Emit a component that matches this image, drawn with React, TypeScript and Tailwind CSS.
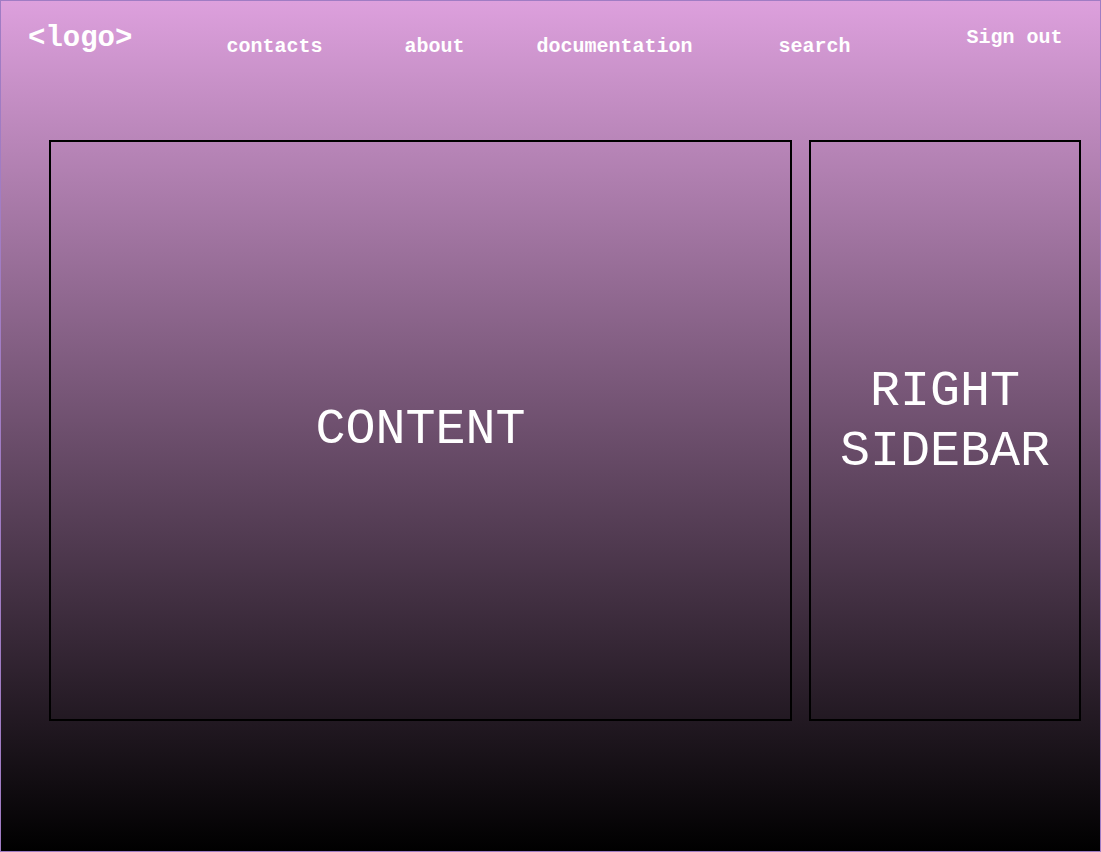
export default function App() {
  const mono = { fontFamily: '"Liberation Mono", "DejaVu Sans Mono", monospace' };
  return (
    <div
      className="w-[1101px] h-[852px] border border-[#a07cc4] bg-[linear-gradient(to_bottom,#dda0dd,#000000)] text-white flex flex-col"
      style={mono}
    >
      <header className="h-[139px] flex items-start pl-[27px] shrink-0">
        <div className="mt-[24px] text-[29px] leading-[28px] font-bold">&lt;logo&gt;</div>
        <a className="ml-[94px] mt-[36px] text-[20px] leading-[20px] font-bold">contacts</a>
        <a className="ml-[82px] mt-[36px] text-[20px] leading-[20px] font-bold">about</a>
        <a className="ml-[72px] mt-[36px] text-[20px] leading-[20px] font-bold">documentation</a>
        <a className="ml-[86px] mt-[36px] text-[20px] leading-[20px] font-bold">search</a>
        <a className="ml-[116px] mt-[27px] text-[20px] leading-[20px] font-bold">Sign out</a>
      </header>
      <main className="flex gap-[17px] pl-[48px]">
        <section className="w-[743px] h-[581px] border-2 border-black flex items-center justify-center">
          <div className="text-[50px] leading-[60px] text-center -mt-[1px]">CONTENT</div>
        </section>
        <aside className="w-[272px] h-[581px] border-2 border-black flex items-center justify-center">
          <div className="text-[50px] leading-[60px] text-center -mt-[18px]">
            RIGHT
            <br />
            SIDEBAR
          </div>
        </aside>
      </main>
    </div>
  );
}
